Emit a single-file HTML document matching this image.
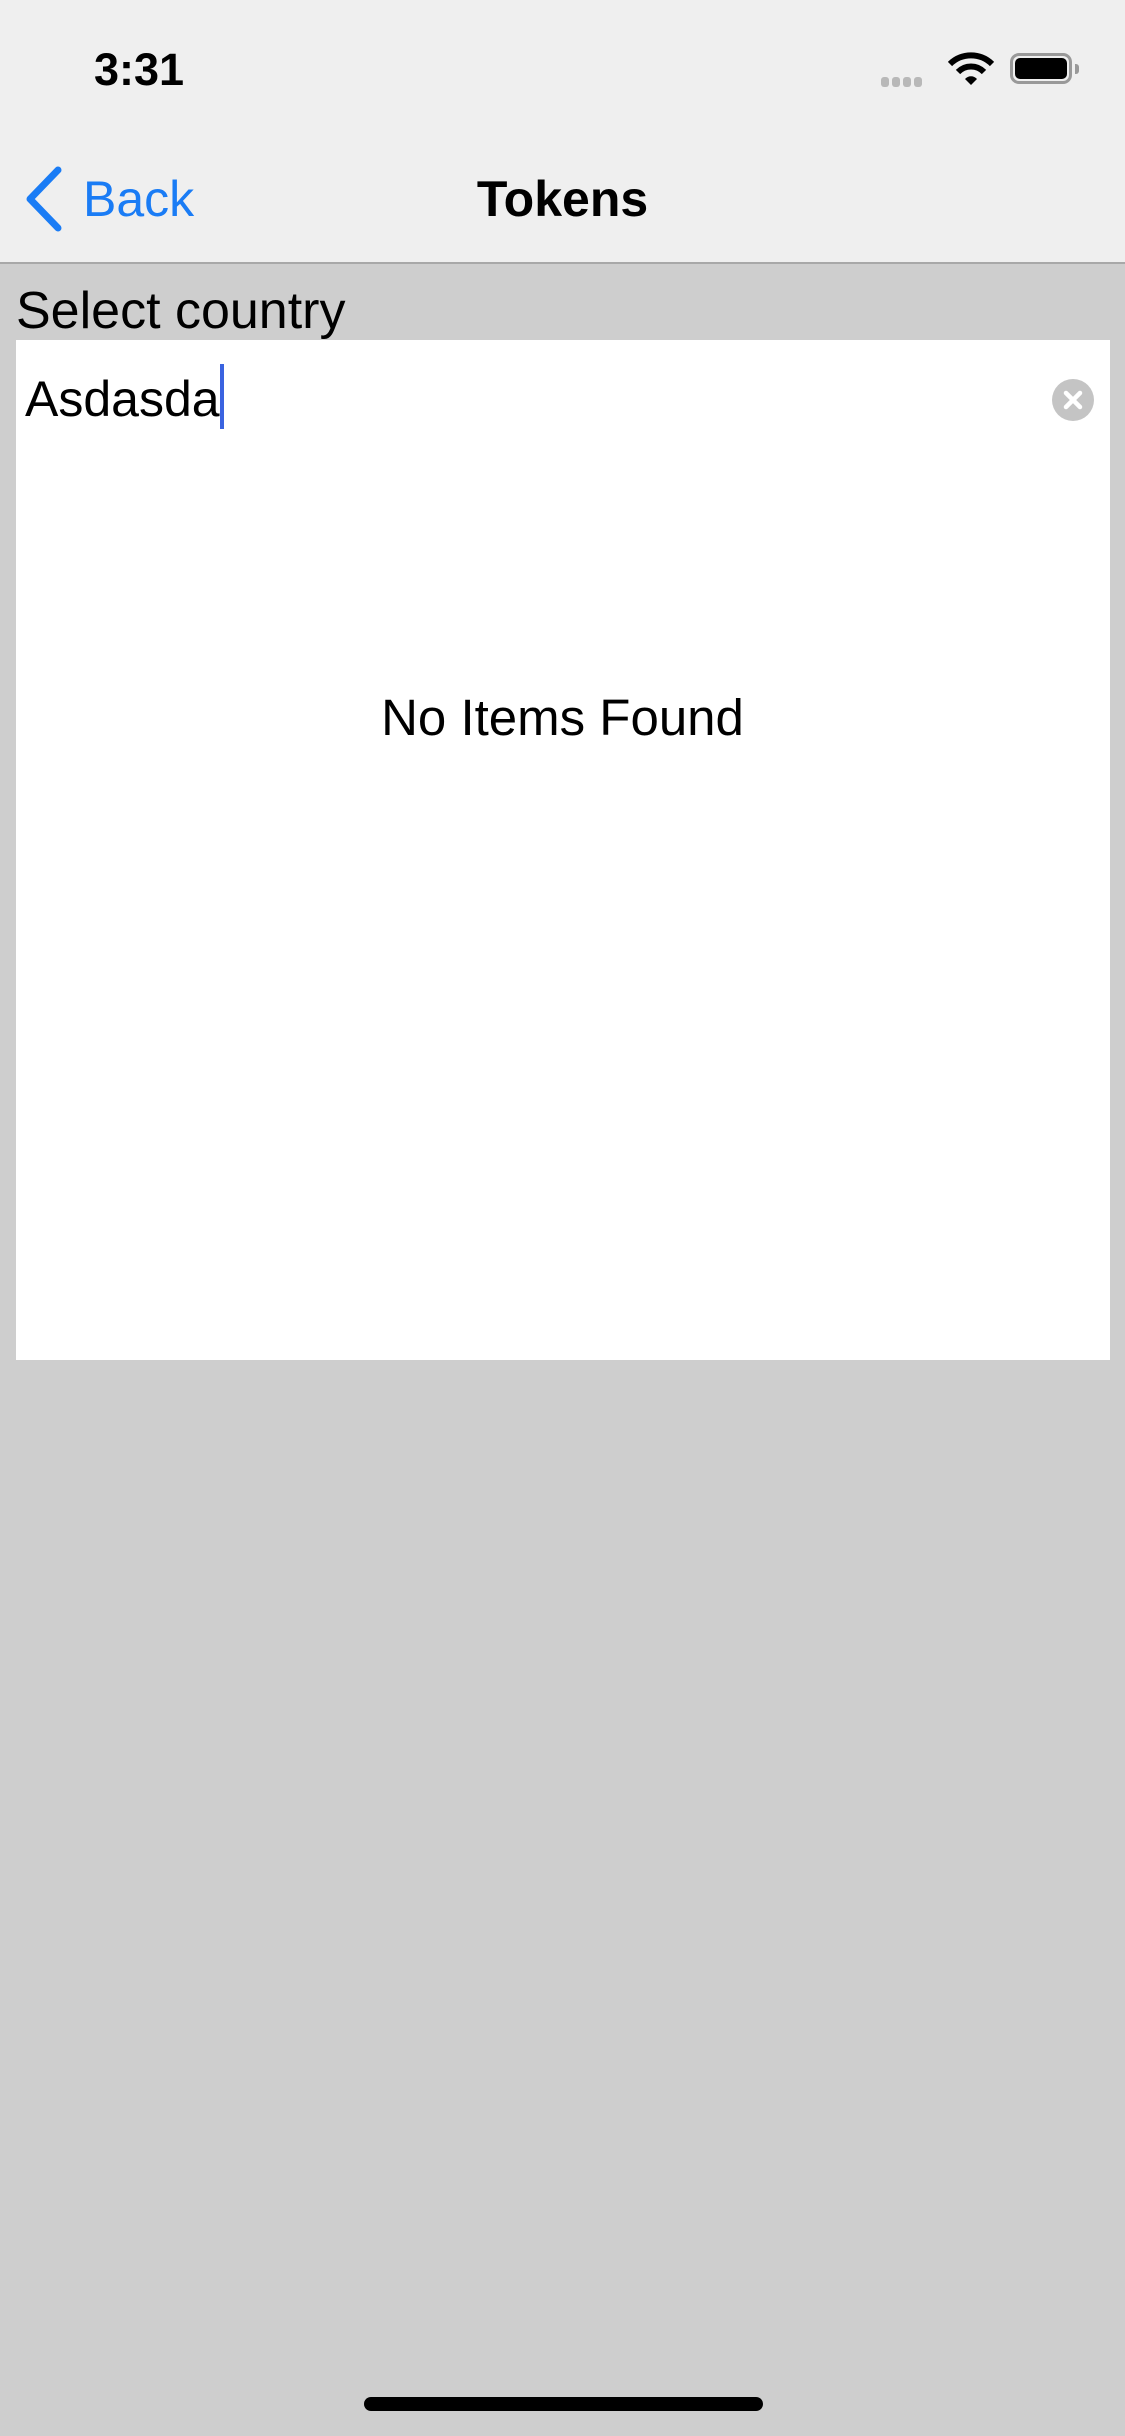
<!DOCTYPE html>
<html><head><style>
body{margin:0;width:1125px;height:2436px;background:#cecece;font-family:"Liberation Sans",sans-serif;position:relative;overflow:hidden}
.nav{position:absolute;left:0;top:0;width:1125px;height:264px;background:#efefef;border-bottom:2px solid #a8a8a8;box-sizing:border-box}
.t{position:absolute;white-space:nowrap;line-height:1}
</style></head><body>
<div class="nav"></div>
<div class="t" style="left:94px;top:47px;font-size:45px;font-weight:bold;color:#000">3:31</div>
<div style="position:absolute;left:881px;top:74px">
<span style="display:inline-block;width:8px;height:10px;border-radius:3px;background:#b8b8b8;margin-right:3px"></span><span style="display:inline-block;width:8px;height:10px;border-radius:3px;background:#b8b8b8;margin-right:3px"></span><span style="display:inline-block;width:8px;height:10px;border-radius:3px;background:#b8b8b8;margin-right:3px"></span><span style="display:inline-block;width:8px;height:10px;border-radius:3px;background:#b8b8b8"></span></div>
<svg style="position:absolute;left:948px;top:52px" width="46" height="34" viewBox="0 0 46 34"><path d="M2 12 A30 30 0 0 1 44 12" stroke="#000" stroke-width="6" fill="none"/><path d="M10 20 A18 18 0 0 1 36 20" stroke="#000" stroke-width="6" fill="none"/><path d="M17 27 L23 33 L29 27 A8 8 0 0 0 17 27Z" fill="#000"/></svg>
<div style="position:absolute;left:1010px;top:53px;width:62px;height:31px;border:3px solid #999;border-radius:9px;box-sizing:border-box"></div>
<div style="position:absolute;left:1015px;top:58px;width:52px;height:21px;background:#000;border-radius:5px"></div>
<div style="position:absolute;left:1075px;top:64px;width:4px;height:10px;background:#999;border-radius:0 3px 3px 0"></div>
<svg style="position:absolute;left:24px;top:166px" width="40" height="66" viewBox="0 0 40 66"><path d="M34 4 L6 33 L34 62" stroke="#1a7cf5" stroke-width="7" fill="none" stroke-linecap="round" stroke-linejoin="round"/></svg>
<div class="t" style="left:83px;top:174px;font-size:50px;color:#1a7cf5">Back</div>
<div class="t" style="left:0;width:1125px;text-align:center;top:174px;font-size:50px;font-weight:bold;color:#000">Tokens</div>
<div class="t" style="left:16px;top:285px;font-size:52px;color:#000">Select country</div>
<div style="position:absolute;left:16px;top:340px;width:1094px;height:1020px;background:#fff"></div>
<div class="t" style="left:25px;top:374px;font-size:50px;color:#000">Asdasda</div>
<div style="position:absolute;left:220px;top:364px;width:4px;height:65px;background:#3a63e0"></div>
<div style="position:absolute;left:1052px;top:379px;width:42px;height:42px;border-radius:50%;background:#c4c4c4"></div>
<svg style="position:absolute;left:1052px;top:379px" width="42" height="42"><path d="M14 14L28 28M28 14L14 28" stroke="#fff" stroke-width="4.5" stroke-linecap="round"/></svg>
<div class="t" style="left:0;width:1125px;text-align:center;top:692px;font-size:51px;color:#000">No Items Found</div>
<div style="position:absolute;left:364px;top:2397px;width:399px;height:14px;border-radius:7px;background:#000"></div>
</body></html>
